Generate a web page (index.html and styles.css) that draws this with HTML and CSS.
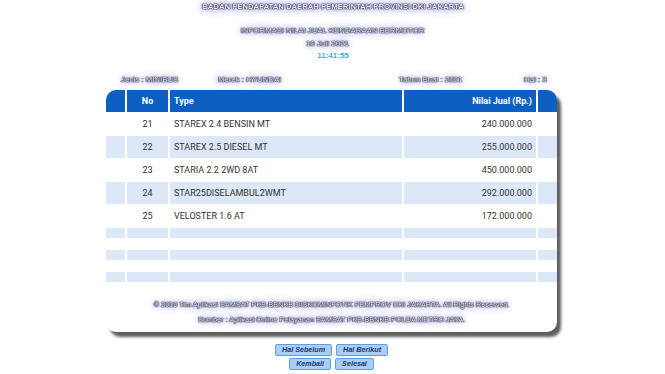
FILE: index.html
```html
<!DOCTYPE html>
<html>
<head>
<meta charset="utf-8">
<link rel="stylesheet" href="styles.css">
</head>
<body>
<div class="page">
  <div class="title glow">BADAN PENDAPATAN DAERAH PEMERINTAH PROVINSI DKI JAKARTA</div>
  <div class="info glow">INFORMASI NILAI JUAL KENDARAAN BERMOTOR</div>
  <div class="date glow">10 Juli 2021</div>
  <div class="time">11:41:55</div>
  <div class="meta glow">
    <span class="m-jenis">Jenis : MINIBUS</span>
    <span class="m-merek">Merek : HYUNDAI</span>
    <span class="m-tahun">Tahun Buat : 2021</span>
    <span class="m-hal">Hal : 3</span>
  </div>
  <div class="card">
    <table class="grid">
      <thead>
        <tr><th class="c-pad"></th><th class="c-no">No</th><th class="c-type">Type</th><th class="c-val">Nilai Jual (Rp.)</th><th class="c-pad"></th></tr>
      </thead>
      <tbody>
        <tr><td></td><td class="c-no">21</td><td class="c-type">STAREX 2.4 BENSIN MT</td><td class="c-val">240.000.000</td><td></td></tr>
        <tr class="alt"><td></td><td class="c-no">22</td><td class="c-type">STAREX 2.5 DIESEL MT</td><td class="c-val">255.000.000</td><td></td></tr>
        <tr><td></td><td class="c-no">23</td><td class="c-type">STARIA 2.2 2WD 8AT</td><td class="c-val">450.000.000</td><td></td></tr>
        <tr class="alt"><td></td><td class="c-no">24</td><td class="c-type">STAR25DISELAMBUL2WMT</td><td class="c-val">292.000.000</td><td></td></tr>
        <tr><td></td><td class="c-no">25</td><td class="c-type">VELOSTER 1.6 AT</td><td class="c-val">172.000.000</td><td></td></tr>
        <tr class="alt empty"><td></td><td></td><td></td><td></td><td></td></tr>
        <tr class="empty"><td></td><td></td><td></td><td></td><td></td></tr>
        <tr class="alt empty"><td></td><td></td><td></td><td></td><td></td></tr>
        <tr class="empty"><td></td><td></td><td></td><td></td><td></td></tr>
        <tr class="alt empty"><td></td><td></td><td></td><td></td><td></td></tr>
      </tbody>
    </table>
    <div class="footer glow">
      <div>© 2010 Tim Aplikasi SAMSAT PKB-BBNKB DISKOMINFOTIK PEMPROV DKI JAKARTA. All Rights Reserved.</div>
      <div>Sumber : Aplikasi Online Pelayanan SAMSAT PKB-BBNKB POLDA METRO JAYA.</div>
    </div>
  </div>
  <div class="buttons">
    <div class="btn-row"><button class="btn">Hal Sebelum</button><button class="btn">Hal Berikut</button></div>
    <div class="btn-row"><button class="btn">Kembali</button><button class="btn">Selesai</button></div>
  </div>
</div>
</body>
</html>
```

FILE: styles.css
```css
html, body {
  margin: 0;
  padding: 0;
  background: #ffffff;
}
.page {
  display: flex;
  flex-direction: column;
  align-items: center;
  font-family: "Liberation Sans", Arial, sans-serif;
  width: 665px;
}
.glow {
  color: #f2f2fa;
  text-shadow: 0 0 1px #2a2a3a, 0 0 1px #2a2a3a, 0 0 1px #2a2a3a, 0 0 1px #2a2a3a, 0 0 5px #7878f0, 0 0 10px #a0a0ff, 0 0 14px #c4c4ff;
}
.title {
  font-size: 7.7px;
  font-weight: bold;
  line-height: 9px;
  padding-top: 2px;
  margin-left: 1px;
}
.info {
  margin-top: 14px;
  font-size: 7.8px;
  line-height: 12px;
}
.date {
  font-size: 8px;
  line-height: 13px;
  margin-left: -10px;
}
.time {
  font-size: 8px;
  font-weight: bold;
  line-height: 12px;
  color: #4ba9dd;
  margin-left: 1px;
}
.meta {
  margin-top: 12px;
  width: 451px;
  display: flex;
  font-size: 7.8px;
  line-height: 12px;
  box-sizing: border-box;
  padding-left: 15px;
  margin-left: -2px;
}
.m-jenis { width: 97px; }
.m-merek { width: 181px; }
.m-tahun { width: 125px; }
.card {
  margin-top: 4px;
  width: 451px;
  margin-left: -2px;
  background: #ffffff;
  border-radius: 10px;
  overflow: hidden;
  box-shadow: 4px 5px 3px rgba(40, 40, 40, 0.75);
}
.grid {
  border-collapse: separate;
  border-spacing: 2px 1px;
  width: calc(100% + 4px);
  margin: -1px -2px 0 -2px;
  font-family: Roboto, "Liberation Sans", sans-serif;
  font-size: 9px;
  color: #333333;
}
.grid th {
  background: #0d5fc2;
  color: #ffffff;
  font-weight: bold;
  height: 22px;
  padding: 0 4px;
}
.grid td {
  height: 22px;
  padding: 0 4px;
}
.grid tr.alt td {
  background: #dce8f8;
}
.grid tr.empty td {
  height: 10px;
}
.c-pad { width: 11px; }
.c-no { width: 33px; text-align: center; }
.grid th.c-type, .grid td.c-type { text-align: left; width: 224px; }
.grid th.c-val, .grid td.c-val { text-align: right; }
.footer {
  padding: 14px 0 5px;
  font-size: 7.3px;
  line-height: 15px;
  text-align: center;
}
.buttons {
  margin-top: 12px;
  display: flex;
  flex-direction: column;
  gap: 2px;
  margin-left: -2px;
}
.btn-row {
  display: flex;
  justify-content: center;
  gap: 4px;
}
.btn {
  font-family: "Liberation Sans", Arial, sans-serif;
  font-size: 7.2px;
  font-weight: bold;
  font-style: italic;
  color: #1c3770;
  background: #a9cdf4;
  border: 1px solid #5f9ee3;
  border-radius: 2px;
  height: 12px;
  padding: 0 6px;
  line-height: 10px;
}
```
